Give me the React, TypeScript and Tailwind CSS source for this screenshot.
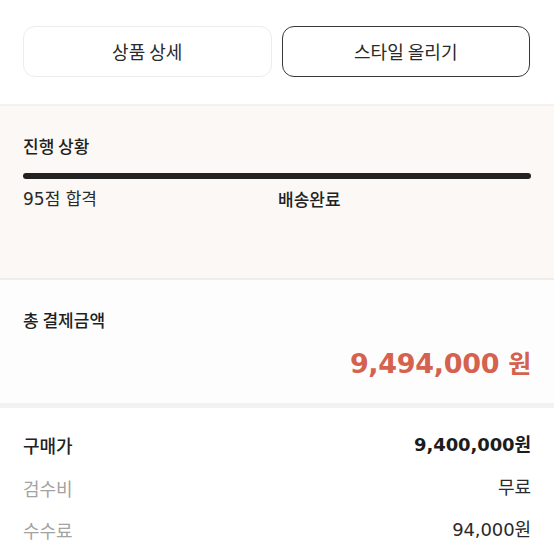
import React from 'react';

const kr = 'font-["Noto_Sans_CJK_KR",sans-serif]';
const num = 'font-["DejaVu_Sans","Noto_Sans_CJK_KR",sans-serif]';

interface FeeRowProps {
  label: string;
  value: string;
  strong?: boolean;
  muted?: boolean;
}

const FeeRow: React.FC<FeeRowProps> = ({ label, value, strong, muted }) => (
  <div className="flex h-[42.5px] items-center justify-between">
    <span
      className={`${kr} text-[18px] leading-[26px] ${
        strong ? 'font-medium text-[#222]' : muted ? 'text-[#a3a3a3]' : 'text-[#222]'
      }`}
    >
      {label}
    </span>
    <span
      className={`${num} text-[18px] leading-[26px] tracking-[-0.1px] ${
        strong ? 'font-bold text-[#1c1c1c]' : 'text-[#2a2a2a]'
      }`}
    >
      {value}
    </span>
  </div>
);

export default function App() {
  return (
    <div className="w-[554px] h-[554px] overflow-hidden bg-white">
      {/* Action buttons */}
      <div className="flex gap-[10px] pl-[23px] pr-[24px] pt-[26px] pb-[27px]">
        <button
          className={`${kr} flex h-[51px] flex-1 items-center justify-center rounded-[12px] border border-[#ececec] bg-white text-[18px] text-[#2a2a2a]`}
        >
          상품 상세
        </button>
        <button
          className={`${kr} flex h-[51px] flex-1 items-center justify-center rounded-[12px] border-[1.5px] border-[#383838] bg-white text-[18px] text-[#2a2a2a]`}
        >
          스타일 올리기
        </button>
      </div>

      <div className="h-[2px] bg-[#f3f2f1]" />

      {/* Progress */}
      <div className="h-[172px] bg-[#fbf8f5] px-[23px] pt-[27px]">
        <h2 className={`${kr} text-[17px] font-medium leading-[25px] text-[#1f1f1f]`}>진행 상황</h2>
        <div className="mt-[15px] h-[6px] rounded-full bg-[#222]" />
        <div className="mt-[8px] grid grid-cols-2">
          <span className={`${num} text-[17px] leading-[24px] text-[#2a2a2a]`}>95점 합격</span>
          <span className={`${kr} pl-[1px] text-[17px] font-medium leading-[24px] text-[#222]`}>배송완료</span>
        </div>
      </div>

      <div className="h-[2px] bg-[#efece9]" />

      {/* Total */}
      <div className="h-[123px] bg-[#fdfdfd] px-[23px] pt-[27px]">
        <h2 className={`${kr} text-[17px] font-medium leading-[25px] text-[#1f1f1f]`}>총 결제금액</h2>
        <div className="mt-[14px] flex justify-end">
          <span className={`${num} text-[27px] font-bold leading-[32px] tracking-[-0.3px] text-[#d4624e]`}>
            9,494,000 <span className={`${kr} text-[25px]`}>원</span>
          </span>
        </div>
      </div>

      <div className="h-[5px] bg-[#f2f2f2]" />

      {/* Breakdown */}
      <div className="px-[23px] pt-[16px]">
        <FeeRow label="구매가" value="9,400,000원" strong />
        <FeeRow label="검수비" value="무료" muted />
        <FeeRow label="수수료" value="94,000원" muted />
      </div>
    </div>
  );
}
